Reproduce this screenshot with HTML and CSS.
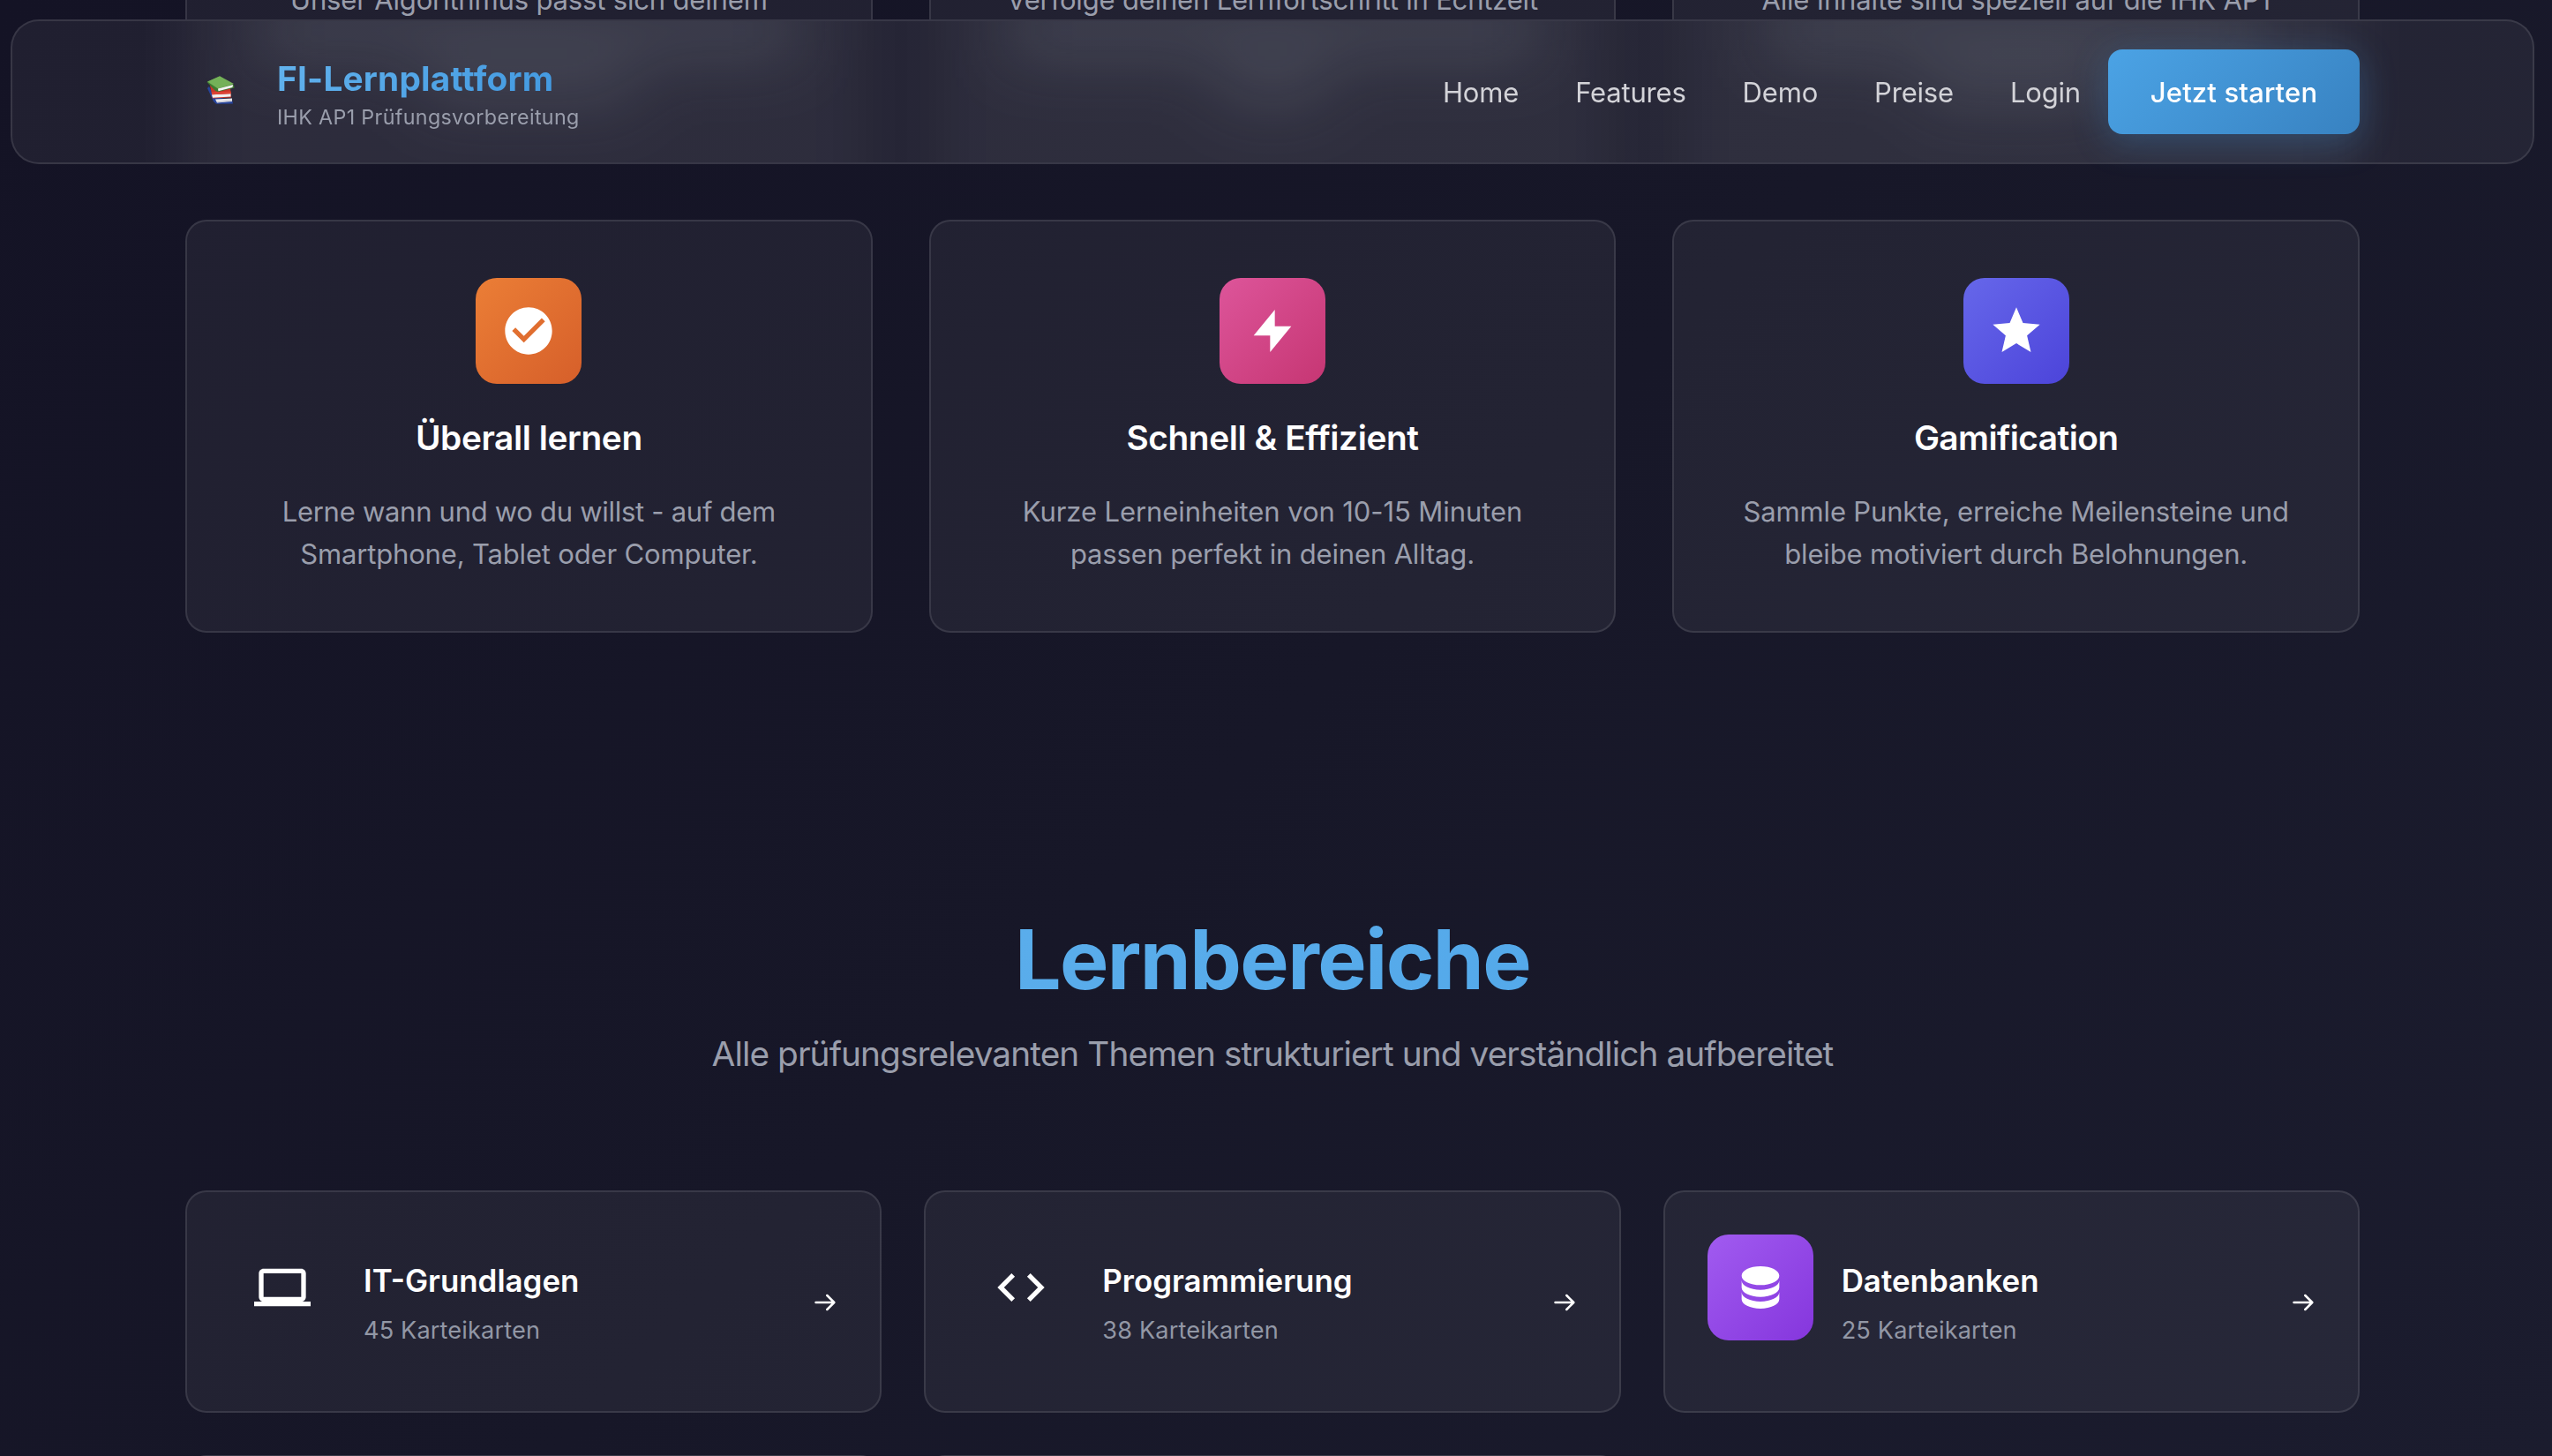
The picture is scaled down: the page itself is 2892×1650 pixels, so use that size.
FILE: index.html
```
<!DOCTYPE html>
<html lang="de">
<head>
<meta charset="utf-8">
<title>FI-Lernplattform</title>
<link rel="stylesheet" href="styles.css">
</head>
<body>
<div class="app">
<nav class="nav">
  <div class="glass">
    <div class="glass-inner">
      <div class="pane"><i class="line w-a"></i><i class="line w-b"></i></div>
      <div class="pane"><i class="line w-c"></i><i class="line w-d"></i></div>
      <div class="pane"><i class="line w-e"></i><i class="line w-f"></i></div>
    </div>
  </div>
  <div class="brand">
    <div class="brand-logo">
      <svg class="books" viewBox="0 0 32 32">
        <path d="M1 14 L3 12 L9 24 L29 27 L30 31.500 L11 31.800 L8 29z" fill="#26449c"/>
        <path d="M10 26.500 L29 25.500 L29 29 L12 30.500z" fill="#e9e9ee"/>
        <path d="M12 29.500 L29 27.600 L29 28.200 L12 30.300z" fill="#b5b5c0"/>
        <path d="M4 11 L27 14 L28 24.500 L7 25.500z" fill="#c8352a"/>
        <path d="M6 21.300 L27.500 20.300 L27.500 23.600 L7 24.800z" fill="#f1f0f0"/>
        <path d="M6 18.500 L27.500 17.500 L28 20 L6 21.300z" fill="#de4436"/>
        <path d="M0.500 7 L15 0.500 L31 10.500 L31.500 13.500 L13 18 L10 17z" fill="#3f7a31"/>
        <path d="M1 6.500 L15 0.300 L31 9 L13 14.500z" fill="#74b158"/>
        <path d="M13 14.500 L30 10 L29.500 13 L13.500 17.300z" fill="#f3f4f1"/>
      </svg>
    </div>
    <div class="brand-text">
      <span class="brand-name">FI-Lernplattform</span>
      <span class="brand-sub">IHK AP1 Prüfungsvorbereitung</span>
    </div>
  </div>
  <div class="nav-right">
    <div class="nav-links">
      <a>Home</a><a>Features</a><a>Demo</a><a>Preise</a><a>Login</a>
    </div>
    <a class="cta">Jetzt starten</a>
  </div>
</nav>

<main class="page">
  <section class="features">
    <div class="grid grid-cut">
      <article class="card card-cut"><p>Unser Algorithmus passt sich deinem</p></article>
      <article class="card card-cut"><p class="even">Verfolge deinen Lernfortschritt in Echtzeit</p></article>
      <article class="card card-cut"><p>Alle Inhalte sind speziell auf die IHK AP1</p></article>
    </div>
    <div class="grid">
      <article class="card">
        <div class="icon orange"><svg viewBox="0 0 24 24"><path d="M12 2C6.480 2 2 6.480 2 12s4.480 10 10 10 10-4.480 10-10S17.520 2 12 2zm-2 15l-5-5 1.410-1.410L10 14.170l7.590-7.590L19 8l-9 9z"/></svg></div>
        <h3>Überall lernen</h3>
        <p><span class="tight">Lerne wann und wo du willst - auf dem</span><br>Smartphone, Tablet oder Computer.</p>
      </article>
      <article class="card">
        <div class="icon pink"><svg viewBox="0 0 24 24"><path d="M13 10V3L4 14h7v7l9-11h-7z"/></svg></div>
        <h3>Schnell &amp; Effizient</h3>
        <p><span class="loose">Kurze Lerneinheiten von 10-15 Minuten</span><br>passen perfekt in deinen Alltag.</p>
      </article>
      <article class="card">
        <div class="icon indigo"><svg viewBox="0 0 24 24"><path d="M12 17.270L18.180 21l-1.640-7.030L22 9.240l-7.190-.61L12 2 9.190 8.630 2 9.240l5.460 4.730L5.820 21z"/></svg></div>
        <h3 class="snug">Gamification</h3>
        <p>Sammle Punkte, erreiche Meilensteine und<br>bleibe motiviert durch Belohnungen.</p>
      </article>
    </div>
  </section>

  <section class="topics">
    <h2>Lernbereiche</h2>
    <p class="lead">Alle prüfungsrelevanten Themen strukturiert und verständlich aufbereitet</p>
    <div class="topic-grid">
      <article class="topic">
        <div class="icon"><svg viewBox="0 0 24 24"><path d="M20 18c1.100 0 1.990-.9 1.990-2L22 6c0-1.100-.9-2-2-2H4c-1.100 0-2 .9-2 2v10c0 1.100.9 2 2 2H0v2h24v-2h-4zM4 6h16v10H4V6z"/></svg></div>
        <div class="topic-text"><h4>IT-Grundlagen</h4><p>45 Karteikarten</p></div>
        <svg class="arrow" viewBox="0 0 24 20"><path d="M1.500 10H22M14.300 2l8 8-8 8"/></svg>
      </article>
      <article class="topic">
        <div class="icon"><svg viewBox="0 0 24 24"><path d="M9.400 16.600L4.800 12l4.600-4.600L8 6l-6 6 6 6 1.400-1.400zm5.200 0l4.600-4.600-4.600-4.600L16 6l6 6-6 6-1.400-1.400z"/></svg></div>
        <div class="topic-text"><h4>Programmierung</h4><p>38 Karteikarten</p></div>
        <svg class="arrow" viewBox="0 0 24 20"><path d="M1.500 10H22M14.300 2l8 8-8 8"/></svg>
      </article>
      <article class="topic">
        <div class="icon purple"><svg viewBox="0 0 24 24"><path d="M12 3C7.580 3 4 4.790 4 7s3.580 4 8 4 8-1.790 8-4-3.580-4-8-4zM4 9v3c0 2.210 3.580 4 8 4s8-1.790 8-4V9c0 2.210-3.580 4-8 4s-8-1.790-8-4zm0 5v3c0 2.210 3.580 4 8 4s8-1.790 8-4v-3c0 2.210-3.580 4-8 4s-8-1.790-8-4z"/></svg></div>
        <div class="topic-text"><h4>Datenbanken</h4><p>25 Karteikarten</p></div>
        <svg class="arrow" viewBox="0 0 24 20"><path d="M1.500 10H22M14.300 2l8 8-8 8"/></svg>
      </article>
      <article class="topic"></article>
      <article class="topic"></article>
    </div>
  </section>
</main>
</div>
</body>
</html>
```
FILE: styles.css
```
* { box-sizing: border-box; margin: 0; padding: 0; }

body { overflow: hidden; background: #171728; }

.app {
  width: 2892px;
  height: 1650px;
  padding-right: 8px;
  overflow: hidden;
  background: linear-gradient(135deg, #141325 0%, #171728 50%, #1b1c2e 100%);
  font-family: Inter, "Liberation Sans", sans-serif;
  font-size: 31.04px;
  line-height: 48px;
  color: #fff;
}

/* Navigation */
.nav {
  position: fixed;
  z-index: 10;
  top: 22px;
  left: 12px;
  width: 2860px;
  height: 164px;
  padding: 0 196px;
  display: flex;
  align-items: center;
  justify-content: space-between;
  border: 2px solid rgba(255, 255, 255, .1);
  border-radius: 32px;
  background: rgba(255, 255, 255, .055);
}

/* Frosted glass: soft shapes of the cards that scroll below the bar */
.glass { position: absolute; z-index: -1; inset: 0; overflow: hidden; border-radius: 30px; }
.glass-inner {
  position: absolute;
  inset: -120px 196px;
  display: grid;
  grid-template-columns: repeat(3, 1fr);
  gap: 64px;
  filter: blur(38px);
}
.pane {
  padding-top: 100px;
  display: flex;
  flex-direction: column;
  align-items: center;
  gap: 18px;
  background: rgba(255, 255, 255, .055);
}
.line { height: 60px; background: rgba(160, 168, 180, .2); }
.line + .line { height: 30px; background: rgba(160, 168, 180, .28); }
.w-a { width: 610px; }
.w-b { width: 240px; }
.w-c { width: 600px; }
.w-d { width: 120px; }
.w-e { width: 560px; }
.w-f { width: 210px; }

.brand { display: flex; align-items: center; gap: 24px; }
.brand-logo { width: 80px; height: 80px; display: flex; justify-content: center; padding-top: 22px; }
.books { width: 32px; height: 32px; }
.brand-text { display: flex; flex-direction: column; }
.brand-name {
  font-size: 38.8px;
  font-weight: 700;
  line-height: 56px;
  letter-spacing: .19px;
  background: linear-gradient(135deg, #63b3ed, #4299e1);
  -webkit-background-clip: text;
  background-clip: text;
  color: transparent;
  align-self: flex-start;
}
.brand-sub { font-size: 23.28px; line-height: 31px; letter-spacing: .34px; color: #9a9eac; }
.nav-right { display: flex; align-items: center; gap: 31px; }
.nav-links { display: flex; gap: 64px; padding-top: 2px; letter-spacing: -.2px; color: #d3d3d8; }
.cta {
  width: 285px;
  height: 96px;
  line-height: 98px;
  text-align: center;
  font-weight: 500;
  letter-spacing: .143px;
  border-radius: 16px;
  background: linear-gradient(135deg, #4ba3e5, #3882c1);
  box-shadow: 0 8px 40px rgba(66, 153, 225, .3);
}

/* Feature cards */
.page { width: 2464px; margin: 0 auto; }
.features { display: flex; flex-direction: column; gap: 227px; }
.grid { display: grid; grid-template-columns: repeat(3, 1fr); gap: 64px; }
.card {
  padding: 64px 64px 63px;
  border: 2px solid rgba(255, 255, 255, .1);
  border-radius: 24px;
  background: rgba(255, 255, 255, .055);
  display: flex;
  flex-direction: column;
  align-items: center;
  text-align: center;
}
.card-cut {
  height: 22px;
  padding: 0;
  border-width: 0 2px;
  border-radius: 0;
  overflow: hidden;
}
.card-cut p { margin-top: -24px; }
.card p { color: #9a9eac; letter-spacing: -.18px; white-space: nowrap; }
.card .tight { letter-spacing: -.3px; }
.card p.even { letter-spacing: -.2px; }
.card .loose { letter-spacing: -.1px; }
.card h3 {
  margin: 32px 0 31px;
  font-size: 38.8px;
  font-weight: 600;
  line-height: 58px;
  letter-spacing: -.4px;
}
.card h3.snug { letter-spacing: -.565px; }

.icon {
  flex: none;
  width: 120px;
  height: 120px;
  border-radius: 24px;
  display: flex;
  align-items: center;
  justify-content: center;
}
.icon svg { width: 64px; height: 64px; fill: #fff; }
.orange { background: linear-gradient(135deg, #eb7e36, #d65f2a); }
.pink { background: linear-gradient(135deg, #dd559a, #c63673); }
.indigo { background: linear-gradient(135deg, #6667ea, #4c44da); }
.purple { background: linear-gradient(135deg, #a15bf0, #8536dd); }

/* Topics */
.topics { margin-top: 312px; text-align: center; }
.topics h2 {
  font-size: 93.12px;
  font-weight: 700;
  line-height: 116px;
  letter-spacing: -1.6px;
  background: linear-gradient(135deg, #63b3ed, #4ba3e8);
  -webkit-background-clip: text;
  background-clip: text;
  color: transparent;
}
.lead { margin: 17px 0 123px; font-size: 38.8px; line-height: 64px; letter-spacing: -.92px; color: #9a9eac; }
.topic-grid { display: grid; grid-template-columns: repeat(3, 1fr); gap: 48px; text-align: left; }
.topic {
  height: 252px;
  padding: 48px;
  display: flex;
  align-items: center;
  border: 2px solid rgba(255, 255, 255, .1);
  border-radius: 24px;
  background: rgba(255, 255, 255, .055);
}
.topic .icon { align-self: flex-start; margin-right: 32px; }
.topic-text { flex: 1; }
.topic h4 { margin-bottom: 3px; font-size: 34.92px; font-weight: 600; line-height: 62px; }
.topic p { font-size: 27.16px; line-height: 45px; letter-spacing: .13px; color: #9297a5; }
.arrow { width: 24px; height: 20px; margin: 2px 2px 0 0; fill: none; stroke: #fff; stroke-width: 2.5; stroke-linecap: round; stroke-linejoin: round; }
```
